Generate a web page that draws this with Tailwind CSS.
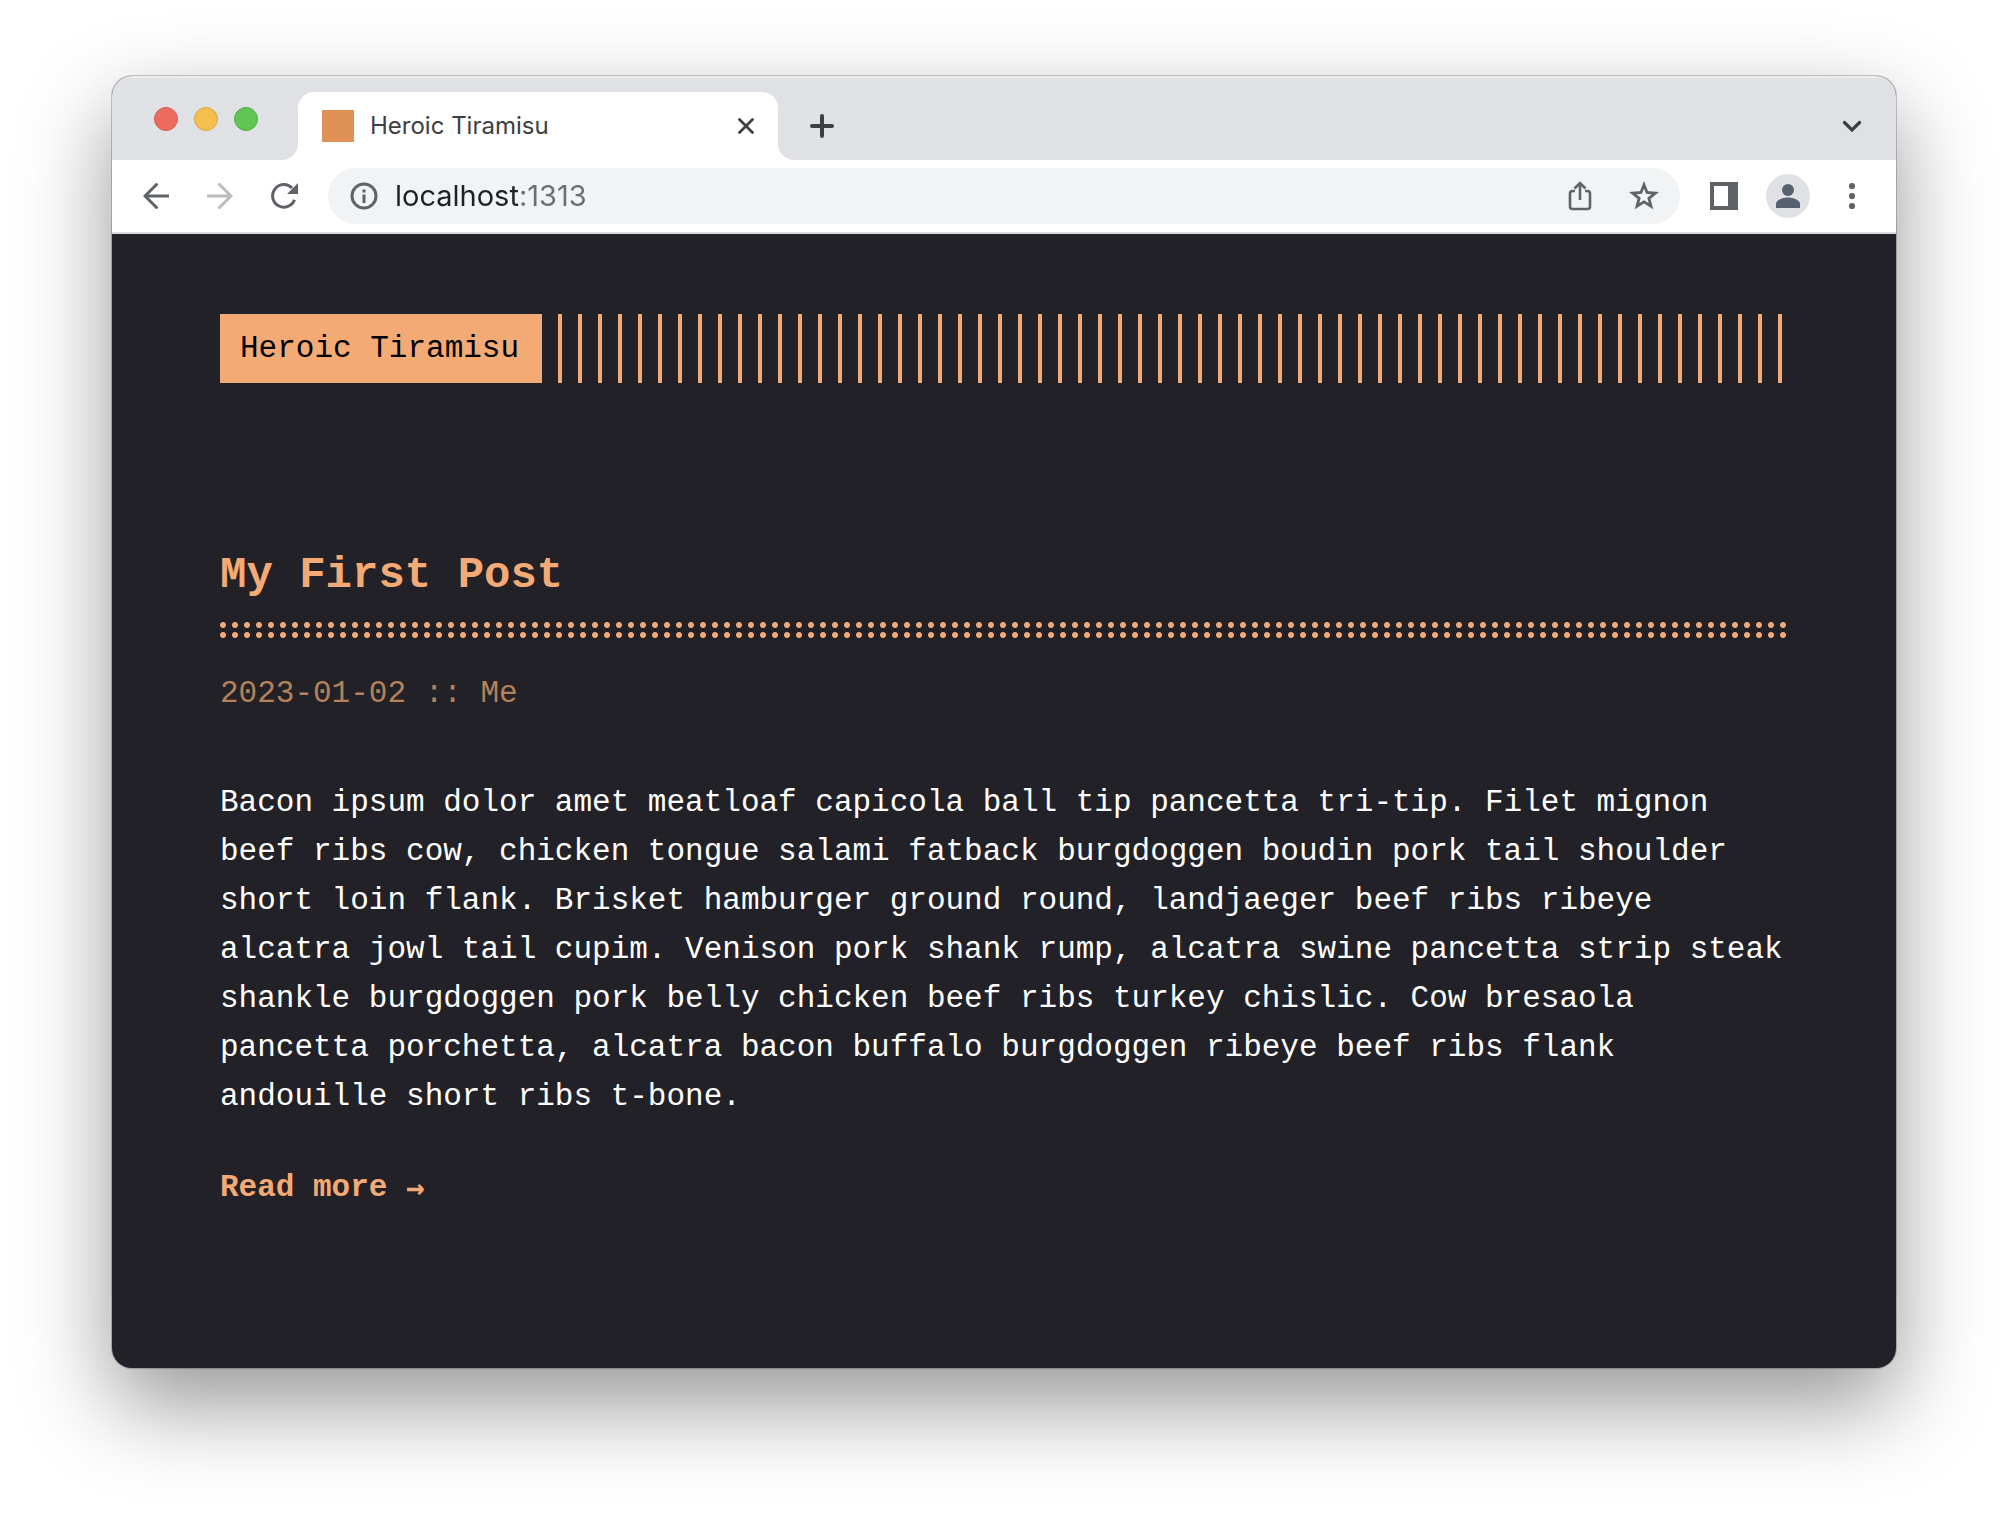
<!DOCTYPE html>
<html lang="en">
<head>
<meta charset="utf-8">
<meta name="viewport" content="width=device-width, initial-scale=1">
<title>Heroic Tiramisu</title>
<script src="https://cdn.jsdelivr.net/npm/@tailwindcss/browser@4"></script>
</head>
<body class="bg-white px-28 pt-[76px] pb-[148px]">
<div class="overflow-hidden rounded-[20px] bg-[#222127] shadow-[0_0_0_1px_rgba(0,0,0,0.2),0_36px_90px_rgba(0,0,0,0.42)]">

  <!-- Tab strip -->
  <div class="flex h-[84px] items-end bg-[#dfe1e5] pr-3 font-['Inter',sans-serif] shadow-[inset_0_2px_0_rgba(255,255,255,0.4)]">
    <div class="flex h-[82px] w-[170px] items-center gap-4 pl-[42px]">
      <button aria-label="Close window" class="size-6 rounded-full border border-[#d85a50] bg-[#ed6a5e]"></button>
      <button aria-label="Minimise window" class="size-6 rounded-full border border-[#dba541] bg-[#f5bf4f]"></button>
      <button aria-label="Zoom window" class="size-6 rounded-full border border-[#52ad45] bg-[#61c554]"></button>
    </div>
    <svg class="size-4 text-white" viewBox="0 0 16 16" fill="currentColor" aria-hidden="true"><path d="M16 0v16H0A16 16 0 0 0 16 0z"/></svg>
    <div class="flex h-[68px] w-[480px] items-center rounded-t-2xl bg-white pr-4 pl-6">
      <button class="flex flex-1 items-center gap-4 text-left text-2xl text-[#3c4043]">
        <span class="size-8 bg-[#e09256]"></span>
        <span>Heroic Tiramisu</span>
      </button>
      <button aria-label="Close tab" class="grid size-8 place-items-center text-[#3c4043]">
        <svg class="size-4" viewBox="0 0 16 16" fill="none" stroke="currentColor" stroke-width="2.8" stroke-linecap="round"><path d="M1.5 1.5l13 13M14.500 1.500l-13 13"/></svg>
      </button>
    </div>
    <svg class="size-4 text-white" viewBox="0 0 16 16" fill="currentColor" aria-hidden="true"><path d="M0 0v16h16A16 16 0 0 1 0 0z"/></svg>
    <button aria-label="New tab" class="grid h-[68px] w-14 place-items-center text-[#3c4043]">
      <svg class="size-6" viewBox="0 0 24 24" fill="none" stroke="currentColor" stroke-width="4" stroke-linecap="round"><path d="M12 2v20M2 12h20"/></svg>
    </button>
    <button aria-label="Search tabs" class="ml-auto grid h-[68px] w-16 place-items-center text-[#3c4043]">
      <svg class="h-3 w-5" viewBox="0 0 20 12" fill="none" stroke="currentColor" stroke-width="3.200" stroke-linecap="round"><path d="M2.500 2.500l7.500 7.500 7.500-7.500"/></svg>
    </button>
  </div>

  <!-- Toolbar -->
  <div class="flex h-[74px] items-center border-b-2 border-[#d9dbde] bg-white px-3 font-['Inter',sans-serif] text-[#5f6368]">
    <button aria-label="Back" class="grid h-14 w-16 place-items-center">
      <svg class="size-[26px]" viewBox="0 0 26 26" fill="none" stroke="currentColor" stroke-width="3"><path d="M25.500 13H2.500M13.500 1.500L2 13l11.500 11.500" stroke-linecap="round"/></svg>
    </button>
    <button aria-label="Forward" disabled class="grid h-14 w-16 place-items-center text-[#bbbcbe]">
      <svg class="size-[26px]" viewBox="0 0 26 26" fill="none" stroke="currentColor" stroke-width="3"><path d="M.5 13h23M12.500 1.500L24 13 12.500 24.500" stroke-linecap="round"/></svg>
    </button>
    <button aria-label="Reload" class="grid h-14 w-16 place-items-center">
      <svg class="size-7" viewBox="0 0 28 28" fill="none" stroke="currentColor" stroke-width="3"><path d="M24.500 17.800A11.300 11.300 0 1 1 22 6"/><path d="M28 1v11H17z" fill="currentColor" stroke="none"/></svg>
    </button>
    <div class="mx-3 flex h-14 flex-1 items-center rounded-full bg-[#f1f3f4] pr-1 pl-[22px]">
      <svg class="mr-[17px] size-7" viewBox="0 0 28 28" fill="none" stroke="currentColor" stroke-width="3" aria-hidden="true"><circle cx="14" cy="14" r="12"/><path d="M14 12.500V21M14 7.500v3"/></svg>
      <input aria-label="Address" type="text" value="localhost:1313" class="min-w-0 flex-1 bg-linear-to-r from-[#202124] from-[125px] to-[#6b6e72] to-[125px] bg-clip-text text-[29px] leading-9 text-transparent caret-black outline-none">
      <button aria-label="Share" class="grid h-14 w-16 place-items-center">
        <svg class="h-[30px] w-6" viewBox="0 0 24 30" fill="none" stroke="currentColor" stroke-width="2.600"><path d="M7 10H4.500A2.500 2.500 0 0 0 2 12.500v13A2.500 2.500 0 0 0 4.500 28h15a2.500 2.500 0 0 0 2.500-2.500v-13a2.500 2.500 0 0 0-2.500-2.500H17M12 19V2.500M6.500 7.500L12 2l5.500 5.500"/></svg>
      </button>
      <button aria-label="Bookmark this tab" class="grid h-14 w-16 place-items-center">
        <svg class="size-[30px]" viewBox="0 0 30 30" fill="none" stroke="currentColor" stroke-width="2.800"><path d="M15 3.800l3 7.700 8.300.6-6.400 5.200 2.100 8-7-4.400-7 4.400 2.100-8-6.400-5.200 8.300-.6z"/></svg>
      </button>
    </div>
    <button aria-label="Side panel" class="grid h-14 w-16 place-items-center">
      <svg class="size-7" viewBox="0 0 28 28" fill="currentColor"><path fill-rule="evenodd" d="M0 0h28v28H0zM4 4v20h14V4z"/></svg>
    </button>
    <button aria-label="Profile" class="grid h-14 w-16 place-items-center">
      <svg class="size-11" viewBox="0 0 44 44"><circle cx="22" cy="22" r="22" fill="#dfe1e5"/><g fill="#586070"><circle cx="22" cy="16" r="6"/><path d="M10 34v-4c0-4 7-6.500 12-6.500S34 26 34 30v4z"/></g></svg>
    </button>
    <button aria-label="Menu" class="grid h-14 w-16 place-items-center">
      <svg class="h-7 w-2" viewBox="0 0 8 28" fill="currentColor"><circle cx="4" cy="4" r="3.100"/><circle cx="4" cy="14" r="3.100"/><circle cx="4" cy="24" r="3.100"/></svg>
    </button>
  </div>

  <!-- Page -->
  <div class="px-[108px] pt-20 pb-[156px] font-['Liberation_Mono',monospace] text-[31px] leading-[49px] text-white">
    <header class="flex">
      <a href="#" class="bg-[#f3aa75] py-[10px] pr-[23px] pl-5 text-black">Heroic Tiramisu</a>
      <div class="flex-1 bg-[repeating-linear-gradient(90deg,transparent_0_16px,#f3aa75_16px_20px)]"></div>
    </header>
    <main>
      <article class="mt-[164px]">
        <h1 class="text-[44px] leading-[56px] font-bold text-[#f3aa75]"><a href="#">My First Post</a></h1>
        <div class="mt-[17px] h-5 bg-[radial-gradient(circle_at_3px_5px,#f3aa75_2.5px,transparent_3.500px)] bg-[length:12px_10px]"></div>
        <div class="mt-[29px] text-[#b4815b]"><time datetime="2023-01-02">2023-01-02</time> :: Me</div>
        <p class="mt-[60px]">Bacon ipsum dolor amet meatloaf capicola ball tip pancetta tri-tip. Filet mignon beef ribs cow, chicken tongue salami fatback burgdoggen boudin pork tail shoulder short loin flank. Brisket hamburger ground round, landjaeger beef ribs ribeye alcatra jowl tail cupim. Venison pork shank rump, alcatra swine pancetta strip steak shankle burgdoggen pork belly chicken beef ribs turkey chislic. Cow bresaola pancetta porchetta, alcatra bacon buffalo burgdoggen ribeye beef ribs flank andouille short ribs t-bone.</p>
        <a href="#" class="mt-[42px] flex h-[49px] w-fit font-bold text-[#f3aa75]"><span class="whitespace-pre">Read more </span><span class="font-['DejaVu_Sans_Mono',monospace]">→</span></a>
      </article>
    </main>
  </div>
</div>
</body>
</html>
